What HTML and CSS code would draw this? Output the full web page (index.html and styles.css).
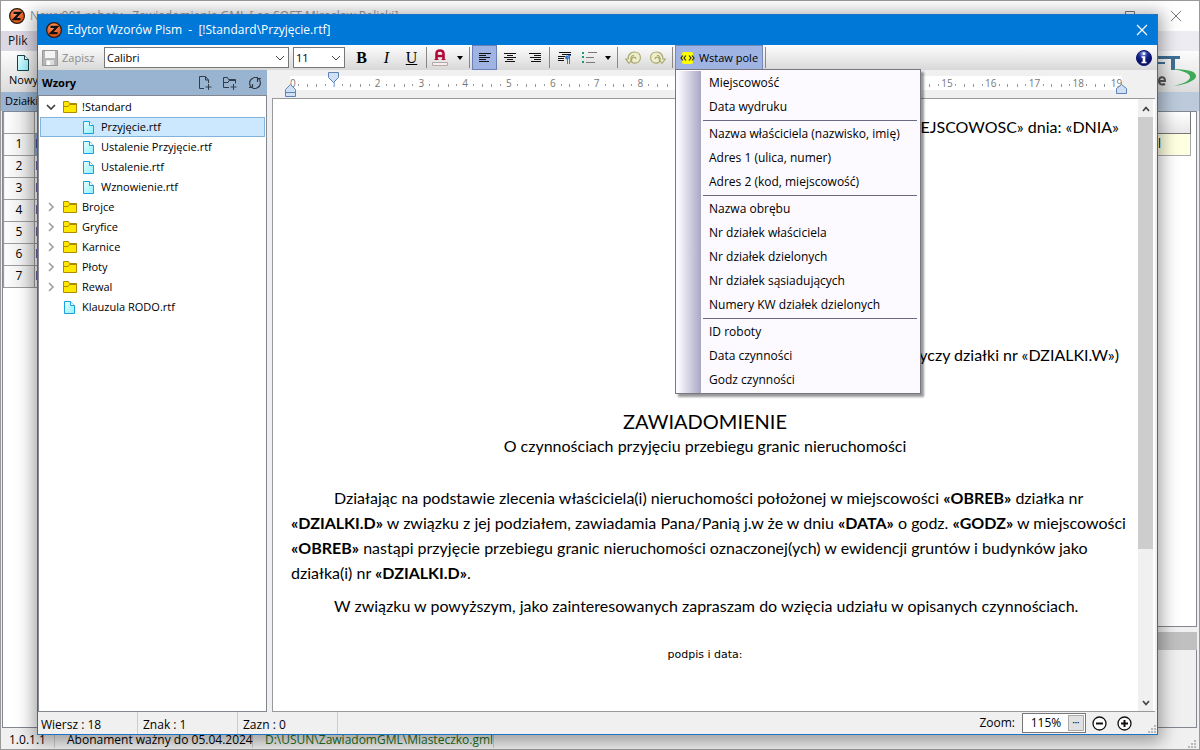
FILE: index.html
```html
<!DOCTYPE html>
<html lang="pl">
<head>
<meta charset="utf-8">
<title>Edytor Wzorów Pism</title>
<link rel="stylesheet" href="styles.css">
</head>
<body>
<svg class="defs" aria-hidden="true">
  <defs>
    <radialGradient id="orange" cx=".45" cy=".3"><stop offset="0" stop-color="#ffa071"/><stop offset="1" stop-color="#e85a1c"/></radialGradient>
    <linearGradient id="cyan" x2="1" y2="1"><stop offset="0" stop-color="#e8ffff"/><stop offset="1" stop-color="#8ff0fa"/></linearGradient>
    <radialGradient id="navy" cx=".45" cy=".2"><stop offset="0" stop-color="#9aa6e0"/><stop offset=".6" stop-color="#1c2c9c"/><stop offset="1" stop-color="#0c1470"/></radialGradient>
  </defs>
  <symbol id="logo" viewBox="0 0 16 16"><circle cx="8" cy="8" r="7.4" fill="url(#orange)" stroke="#2a1a14" stroke-width="1.2"/><path d="M4.5 4.800h6.500L5 11.200h6.500" fill="none" stroke="#111" stroke-width="2.200"/></symbol>
  <symbol id="folder" viewBox="0 0 14 12"><path d="M.5 11.500V.5h5l1 2h7v9z" fill="#ffe800" stroke="#b08a00"/><path d="M1 5.500h4l1.500-2H13" fill="none" stroke="#b08a00"/></symbol>
  <symbol id="file" viewBox="0 0 11 13"><path d="M.5.5h6l4 4v8H.5z" fill="url(#cyan)" stroke="#1ea0dc"/><path d="M6.500.5v4h4" fill="#fff" stroke="#1ea0dc"/></symbol>
  <symbol id="open" viewBox="0 0 10 6"><path d="M1 1l4 4 4-4" fill="none" stroke="#404040" stroke-width="1.700"/></symbol>
  <symbol id="shut" viewBox="0 0 6 10"><path d="M1 1l4 4-4 4" fill="none" stroke="#a0a0a0" stroke-width="1.700"/></symbol>
  <symbol id="grip" viewBox="0 0 9 9"><path d="M6 0h2v2H6zM3 3h2v2H3zM6 3h2v2H6zM0 6h2v2H0zM3 6h2v2H3zM6 6h2v2H6z" fill="#b8b8b8"/></symbol>
</svg>

<main class="app">
  <header class="app-title">
    <svg class="logo"><use href="#logo"/></svg>
    <span>Nowy001 roboty - Zawiadomienia GML [ os-SOFT Mirosław Poliski]</span>
    <span class="grow"></span>
    <svg class="win-buttons" viewBox="0 0 60 12"><path d="M2.500 1.500h9v9h-9zM48 1l10 10M58 1L48 11" fill="none" stroke="#777"/></svg>
  </header>
  <nav class="app-menu"><a href="#">Plik</a></nav>
  <div class="app-tools">
    <button class="new-button" type="button">
      <svg viewBox="0 0 12 16"><path d="M.5.500h7l4 4v11H.5z" fill="url(#cyan)" stroke="#18404c"/><path d="M7.500.5v4h4" fill="#fff" stroke="#18404c"/></svg>
      Nowy
    </button>
    <svg class="brand" viewBox="0 0 60 40" role="img" aria-label="SOFT">
      <path d="M0 5h27v3H0zM18 7h4v12h-4zM12 11v2H3v-2z" fill="#3f6f95"/>
      <path d="M18 18c16 0 25 2 25 7s-12 9-23 10c10-2 17-5 17-9s-9-7-19-8z" fill="#3faa55"/>
      <path d="M6 30h6c0-5-6-5-6 0 0 4 4 4 6 3" fill="none" stroke="#555" stroke-width="2"/>
    </svg>
  </div>
  <div class="app-caption">Działki</div>
  <div class="app-body">
    <div class="parcel-pane">
      <table class="parcels">
        <tr class="head"><th></th><td></td></tr>
        <tr class="current"><th>1</th><td>I</td></tr>
        <tr><th>2</th><td>I</td></tr>
        <tr><th>3</th><td>I</td></tr>
        <tr><th>4</th><td>I</td></tr>
        <tr><th>5</th><td>I</td></tr>
        <tr><th>6</th><td>I</td></tr>
        <tr><th>7</th><td>I</td></tr>
      </table>
    </div>
    <div class="owner-pane">
      <div class="owners"><div class="owner-head"></div><div class="owner-row">el</div></div>
      <div class="owner-bar"></div>
      <div class="owner-notes"></div>
    </div>
  </div>
  <footer class="app-status">
    <span class="version">1.0.1.1</span>
    <span class="licence">Abonament ważny do 05.04.2024</span>
    <span class="path">D:\USUN\ZawiadomGML\Miasteczko.gml</span>
    <span class="grow"></span>
    <svg class="grip"><use href="#grip"/></svg>
  </footer>
</main>

<section class="dialog" role="dialog" aria-labelledby="dialog-title">
  <header class="dialog-title">
    <svg class="logo"><use href="#logo"/></svg>
    <h1 id="dialog-title">Edytor Wzorów Pism&nbsp; -&nbsp; [!Standard\Przyjęcie.rtf]</h1>
    <button class="close" type="button" aria-label="Zamknij"><svg viewBox="0 0 12 12"><path d="M1 1l10 10M11 1L1 11" stroke="#fff" stroke-width="1.200"/></svg></button>
  </header>

  <div class="toolbar">
    <button class="save" type="button" disabled>
      <svg viewBox="0 0 16 16"><path d="M.5.500h15v15H.5z" fill="#b4b4b4" stroke="#999"/><path d="M3 1h10v7H3z" fill="#f4f4f4"/><path d="M4 10h8v5H4z" fill="#ddd"/><path d="M5 11h3v4H5z" fill="#fff"/></svg>
      Zapisz
    </button>
    <select class="font-name" aria-label="Czcionka"><option>Calibri</option></select>
    <select class="font-size" aria-label="Rozmiar"><option>11</option></select>
    <button class="tool style-b" type="button">B</button>
    <button class="tool style-i" type="button">I</button>
    <button class="tool style-u" type="button">U</button>
    <span class="sep"></span>
    <button class="tool wide" type="button" aria-label="Kolor czcionki"><svg viewBox="0 0 32 18"><path d="M4.500 11V4.500Q4.500 1.500 8 1.500T11.500 4.500V11M4 7h8" fill="none" stroke="#b00c38" stroke-width="2.600"/><path d="M2.500 10.500h4M9.500 10.500h4" stroke="#b00c38"/><path d="M.5 13.500h15v3H.5z" fill="#f4eeee" stroke="#b8a8a8"/><path d="M25 7h6l-3 4z"/></svg></button>
    <span class="sep"></span>
    <button class="tool on" type="button" aria-label="Do lewej"><svg viewBox="0 0 12 12"><path d="M0 1.500h12M0 3.500h7M0 5.500h11M0 7.500h7M0 9.500h10" stroke="#111"/></svg></button>
    <button class="tool" type="button" aria-label="Do środka"><svg viewBox="0 0 12 12"><path d="M0 1.500h12M3 3.500h6M0 5.500h12M3 7.500h6M1 9.500h10" stroke="#111"/></svg></button>
    <button class="tool" type="button" aria-label="Do prawej"><svg viewBox="0 0 12 12"><path d="M0 1.500h12M5 3.500h7M1 5.500h11M5 7.500h7M2 9.500h10" stroke="#111"/></svg></button>
    <span class="sep"></span>
    <button class="tool para" type="button" aria-label="Akapit"><svg viewBox="0 0 14 14"><path d="M1 1.500h12M4 3.500h9M0 5.500h7M0 7.500h6M0 9.500h6" stroke="#111"/><path d="M9.500 13V5M11.500 13V5M13 4.500H10" stroke="#3a78d0" fill="none"/><circle cx="9" cy="6.500" r="2" fill="#3a78d0"/></svg></button>
    <button class="tool wide list" type="button" aria-label="Lista"><svg viewBox="0 0 30 14"><path d="M1 1h2v2H1zM1 5h2v2H1zM1 10h2v2H1z" fill="#199a7a"/><path d="M7 1.500h9M5 6.500h8M5 11.500h9" stroke="#777"/><path d="M24 5h6l-3 4z"/></svg></button>
    <span class="sep"></span>
    <button class="tool turn" type="button" aria-label="Cofnij"><svg viewBox="0 0 16 14"><path d="M4 12.500L.8 8h2.400C3 4 5.500 1 9.200 1c3.600 0 6.200 2.300 6.200 5.500s-2.400 5.600-5.600 5.600c-2.200 0-3.700-1.400-3.700-3.100 0-1.600 1.200-2.800 2.700-2.800 1.200 0 2 .8 2 1.800" fill="#eeeecb" stroke="#a9a971" stroke-width="1.200"/><path d="M4 12.500L7 8H5.800c.2-2.400 1.500-3.800 3.400-3.800" fill="none" stroke="#a9a971" stroke-width="1.100"/></svg></button>
    <button class="tool turn" type="button" aria-label="Ponów"><svg class="flip" viewBox="0 0 16 14"><path d="M4 12.500L.8 8h2.400C3 4 5.500 1 9.200 1c3.600 0 6.200 2.300 6.200 5.500s-2.400 5.600-5.600 5.600c-2.200 0-3.700-1.400-3.700-3.100 0-1.600 1.200-2.800 2.700-2.800 1.200 0 2 .8 2 1.800" fill="#eeeecb" stroke="#a9a971" stroke-width="1.200"/><path d="M4 12.500L7 8H5.800c.2-2.400 1.500-3.800 3.400-3.800" fill="none" stroke="#a9a971" stroke-width="1.100"/></svg></button>
    <span class="sep"></span>
    <div class="insert">
      <button class="insert-button" type="button" aria-expanded="true">
        <svg viewBox="0 0 15 12"><rect x="2" width="11" height="12" rx="2" fill="#ff0"/><path d="M3 3.500L1 6l2 2.500M6 3.500L4 6l2 2.500M9 3.500L11 6 9 8.500M12 3.500L14 6l-2 2.500" fill="none" stroke="#222" stroke-width="1.200"/></svg>
        Wstaw pole
      </button>
      <div class="menu">
        <button type="button">Miejscowość</button>
        <button type="button">Data wydruku</button>
        <hr>
        <button type="button">Nazwa właściciela (nazwisko, imię)</button>
        <button type="button">Adres 1 (ulica, numer)</button>
        <button type="button">Adres 2 (kod, miejscowość)</button>
        <hr>
        <button type="button">Nazwa obrębu</button>
        <button type="button">Nr działek właściciela</button>
        <button type="button">Nr działek dzielonych</button>
        <button type="button">Nr działek sąsiadujących</button>
        <button type="button">Numery KW działek dzielonych</button>
        <hr>
        <button type="button">ID roboty</button>
        <button type="button">Data czynności</button>
        <button type="button">Godz czynności</button>
      </div>
    </div>
    <span class="sep"></span>
    <span class="grow"></span>
    <button class="info" type="button" aria-label="Informacje"><svg viewBox="0 0 16 16"><circle cx="8" cy="8" r="7.500" fill="url(#navy)" stroke="#0c1470"/><path d="M6.700 2.500h2.600v2.300H6.700zM5.500 6.200h3.800v5.500h1.200v1.500h-5v-1.500h1.200v-4H5.500z" fill="#fff"/></svg></button>
  </div>

  <div class="work">
    <aside class="side">
      <div class="side-head">
        <h2>Wzory</h2>
        <button type="button" aria-label="Nowy plik"><svg viewBox="0 0 14 14"><path d="M6 12.500H1.500V.5h6l3 3.500v3M7.500.5V4h3M10.500 8v6M7.500 11h6" fill="none" stroke="#333c48"/></svg></button>
        <button type="button" aria-label="Nowy folder"><svg viewBox="0 0 14 14"><path d="M6 11.500H.5v-10h4l1 2h7v4M.5 6.500H5l1-2h6M10.500 8v6M7.500 11h6" fill="none" stroke="#333c48"/></svg></button>
        <button type="button" aria-label="Odśwież"><svg viewBox="0 0 14 14"><path d="M3.500 11.500C.5 8.500 1 3.500 5.500 2M5.500 1.500H10M1 11.500h3.500V8M10.500 2.500c3 3 2.500 8-2 9.500M8.500 12.500H4.500M13 2.500H9.500V6" fill="none" stroke="#333c48" stroke-width="1.200"/></svg></button>
      </div>
      <ul class="tree">
        <li><svg class="twist open"><use href="#open"/></svg><svg class="folder"><use href="#folder"/></svg>!Standard</li>
        <li class="child selected"><svg class="file"><use href="#file"/></svg>Przyjęcie.rtf</li>
        <li class="child"><svg class="file"><use href="#file"/></svg>Ustalenie Przyjęcie.rtf</li>
        <li class="child"><svg class="file"><use href="#file"/></svg>Ustalenie.rtf</li>
        <li class="child"><svg class="file"><use href="#file"/></svg>Wznowienie.rtf</li>
        <li><svg class="twist"><use href="#shut"/></svg><svg class="folder"><use href="#folder"/></svg>Brojce</li>
        <li><svg class="twist"><use href="#shut"/></svg><svg class="folder"><use href="#folder"/></svg>Gryfice</li>
        <li><svg class="twist"><use href="#shut"/></svg><svg class="folder"><use href="#folder"/></svg>Karnice</li>
        <li><svg class="twist"><use href="#shut"/></svg><svg class="folder"><use href="#folder"/></svg>Płoty</li>
        <li><svg class="twist"><use href="#shut"/></svg><svg class="folder"><use href="#folder"/></svg>Rewal</li>
        <li class="loose"><svg class="file"><use href="#file"/></svg>Klauzula RODO.rtf</li>
      </ul>
    </aside>

    <div class="editor">
      <div class="ruler">
        <ol class="scale">
          <li class="edge">0</li><li>1</li><li>2</li><li>3</li><li>4</li><li>5</li><li>6</li><li>7</li><li>8</li><li>9</li><li>10</li><li>11</li><li>12</li><li>13</li><li>14</li><li>15</li><li>16</li><li>17</li><li>18</li><li class="edge last">19</li>
        </ol>
        <svg class="mark first" viewBox="0 0 11 12"><path d="M.5.5h10v5l-5 5-5-5z" fill="#cfe0f5" stroke="#5f83b5"/></svg>
        <svg class="mark left" viewBox="0 0 11 13"><path d="M.5 12.500V5.500l5-5 5 5v7zM.5 8.500h10" fill="#cfe0f5" stroke="#5f83b5"/></svg>
        <svg class="mark right" viewBox="0 0 11 10"><path d="M.5 9.500V4.500l5-4 5 4v5z" fill="#cfe0f5" stroke="#5f83b5"/></svg>
      </div>
      <div class="paper">
        <article class="text">
          <p class="place">«MIEJSCOWOSC» dnia: «DNIA»</p>
          <p class="ref">(dotyczy działki nr «DZIALKI.W»)</p>
          <h3>ZAWIADOMIENIE</h3>
          <p class="sub">O czynnościach przyjęciu przebiegu granic nieruchomości</p>
          <p class="body">Działając na podstawie zlecenia właściciela(i) nieruchomości położonej w miejscowości <b>«OBREB»</b> działka nr<br><b>«DZIALKI.D»</b> w związku z jej podziałem, zawiadamia Pana/Panią j.w że w dniu <b>«DATA»</b> o godz. <b>«GODZ»</b> w miejscowości<br><b>«OBREB»</b> nastąpi przyjęcie przebiegu granic nieruchomości oznaczonej(ych) w ewidencji gruntów i budynków jako<br>działka(i) nr <b>«DZIALKI.D»</b>.</p>
          <p class="body">W związku w powyższym, jako zainteresowanych zapraszam do wzięcia udziału w opisanych czynnościach.</p>
          <p class="sign">podpis i data:</p>
        </article>
        <div class="scroll">
          <svg viewBox="0 0 8 6"><path d="M1 5l3-3.500L7 5" fill="none" stroke="#444" stroke-width="1.700"/></svg>
          <div class="thumb"></div>
          <svg viewBox="0 0 8 6"><path d="M1 1l3 3.500L7 1" fill="none" stroke="#444" stroke-width="1.700"/></svg>
        </div>
      </div>
    </div>
  </div>

  <footer class="dialog-status">
    <span class="cell">Wiersz : 18</span>
    <span class="cell">Znak : 1</span>
    <span class="cell">Zazn : 0</span>
    <span class="grow"></span>
    <label for="zoom">Zoom:</label>
    <span class="zoom-box"><input id="zoom" type="text" value="115%"><button type="button" aria-label="Wybierz">•••</button></span>
    <button class="round" type="button" aria-label="Pomniejsz"><svg viewBox="0 0 15 15"><circle cx="7.500" cy="7.500" r="6.500" fill="#fff" stroke="#111" stroke-width="1.300"/><path d="M4 7.500h7" stroke="#111" stroke-width="2"/></svg></button>
    <button class="round" type="button" aria-label="Powiększ"><svg viewBox="0 0 15 15"><circle cx="7.500" cy="7.500" r="6.500" fill="#fff" stroke="#111" stroke-width="1.300"/><path d="M4 7.500h7M7.500 4v7" stroke="#111" stroke-width="2"/></svg></button>
    <svg class="grip"><use href="#grip"/></svg>
  </footer>
</section>
</body>
</html>
```
FILE: styles.css
```css
* { box-sizing: border-box; }
body { margin: 0; min-height: 100vh; position: relative; overflow: hidden; background: #f0f0f0; color: #000; font: 12px/16px "Open Sans", "Noto Sans", sans-serif; }
button, input, select { font: inherit; color: inherit; }
button { margin: 0; padding: 0; border: 0; background: none; display: flex; align-items: center; justify-content: center; }
h1, h2, h3, p, ul, ol { margin: 0; padding: 0; font-weight: normal; }
ul, ol { list-style: none; }
svg { display: block; flex: none; }
.defs { position: absolute; width: 0; height: 0; }
.grow { flex: 1; }
.logo { width: 16px; height: 16px; }
.grip { width: 9px; height: 9px; align-self: flex-end; }

/* main window */
.app { display: flex; flex-direction: column; height: 100vh; border: 1px solid #999; }
.app-title { display: flex; align-items: center; gap: 5px; height: 30px; flex: none; padding: 0 16px 0 8px; background: #fff; color: #999; }
.win-buttons { width: 60px; height: 12px; }
.app-menu { height: 20px; flex: none; padding: 2px 7px; background: linear-gradient(90deg, #dcd7e5, #ececf2); }
.app-menu a { color: #111; text-decoration: none; }
.app-tools { display: flex; justify-content: space-between; height: 41px; flex: none; padding-left: 8px; background: linear-gradient(#fcfcfc, #dcdcdc); }
.new-button { flex-direction: column; gap: 1px; justify-content: flex-start; padding-top: 4px; font-size: 11px; }
.new-button svg { width: 12px; height: 16px; }
.brand { width: 60px; height: 40px; margin-right: -14px; }
.app-caption { height: 19px; flex: none; padding: 1px 4px; background: linear-gradient(90deg, #99b4d1, #bccadb); font-size: 11px; }
.app-body { display: flex; flex: 1; gap: 4px; padding: 0 2px 0 1px; min-height: 0; }
.parcel-pane { flex: 1; background: #fff; border: 1px solid #828790; }
.parcels { border-collapse: collapse; }
.parcels th, .parcels td { height: 22px; padding: 0; border: 1px solid #9a9a9a; }
.parcels .head th, .parcels .head td { height: 21px; border-top: 0; }
.parcels th { width: 31px; background: linear-gradient(90deg, #fdfdfd, #e4e4e4); font-weight: normal; }
.parcels td { width: 90px; color: #003c90; }
.parcels .current td { background: #8db2e0; }
.owner-pane { flex: 1; display: flex; flex-direction: column; min-width: 0; }
.owners { flex: 1; background: #fff; border: 1px solid #828790; padding-right: 5px; }
.owner-head { height: 22px; border: 1px solid #777; border-top: 0; background: linear-gradient(#fff, #e8e8e8); }
.owner-row { height: 22px; padding: 2px 29px; border: 1px solid #aaa; border-top: 0; background: #ffffe1; text-align: right; }
.owner-bar { height: 18px; margin-top: 5px; background: #c0c0c0; }
.owner-notes { height: 78px; border: 1px solid #828790; border-top: 0; background: #f0f0f0; }
.app-status { display: flex; align-items: center; height: 21px; flex: none; background: #f0f0f0; padding: 2px 2px 0 0; white-space: nowrap; }
.app-status span:not(.grow) { border-right: 1px solid #ccc; }
.version { width: 54px; padding-left: 8px; }
.licence { width: 198px; padding-left: 12px; }
.app-status .path { padding-left: 12px; color: #207020; border: 0; }

/* dialog window */
.dialog { position: absolute; inset: 14px 42px 15px 37px; display: flex; flex-direction: column; border: 1px solid #1d74c4; background: #f0f0f0; box-shadow: 0 3px 16px 4px rgba(0, 0, 0, .35); }
.dialog-title { display: flex; align-items: center; gap: 5px; height: 30px; flex: none; padding: 0 9px 0 8px; background: #0078d7; color: #fff; }
.dialog-title h1 { font-size: 12px; flex: 1; }
.close svg { width: 12px; height: 12px; }

.toolbar { display: flex; align-items: center; height: 25px; flex: none; padding: 0 5px 0 4px; background: linear-gradient(#fdfdfd, #d8d8d8); font-size: 11px; }
.save { gap: 4px; width: 62px; justify-content: flex-start; color: #8c8c8c; }
.save svg { width: 16px; height: 16px; }
.toolbar select { height: 21px; padding: 0 0 0 2px; border: 1px solid #777; appearance: none; background: #fff url("data:image/svg+xml,%3Csvg xmlns='http://www.w3.org/2000/svg' width='10' height='6'%3E%3Cpath d='M1 1l4 4 4-4' fill='none' stroke='%23444'/%3E%3C/svg%3E") no-repeat right 3px center; }
.font-name { width: 185px; }
.toolbar .font-size { width: 52px; margin: 0 4px; }
.tool { width: 25px; height: 25px; }
.tool svg { width: 12px; height: 12px; }
.tool.wide { width: 38px; }
.tool.wide svg { width: 32px; height: 18px; }
.tool.list svg { width: 30px; height: 14px; }
.tool.para svg { width: 14px; height: 14px; }
.tool.turn svg { width: 16px; height: 14px; }
.flip { transform: scaleX(-1); }
.tool.on { background: #a0b4e4; border: 1px solid #6c80b8; }
.style-b, .style-i, .style-u { font: 16px/20px "Liberation Serif", serif; }
.style-b { font-weight: bold; }
.style-i { font-style: italic; }
.style-u { text-decoration: underline; }
.sep { width: 1px; height: 21px; margin: 0 2px; background: #888; }
.info svg { width: 16px; height: 16px; }

.insert { position: relative; font-size: 12px; }
.insert-button { gap: 4px; width: 88px; height: 25px; background: #a0b4e4; border: 1px solid #7688b8; font-size: 11px; }
.insert-button svg { width: 15px; height: 12px; }
.menu { position: absolute; z-index: 2; top: 24px; left: 0; width: 246px; padding: 1px 3px 1px 27px; border: 1px solid #77777f; background: linear-gradient(90deg, #fcfaff, #a9a8c4) 2px 1px / 23px 100% no-repeat, #fcfaff; box-shadow: 3px 3px 2px rgba(0, 0, 0, .4); }
.menu button { width: 100%; height: 24px; padding-left: 6px; justify-content: flex-start; white-space: nowrap; }
.menu hr { height: 1px; margin: 1px 0; border: 0; background: #6a6a84; }

.work { display: flex; flex: 1; min-height: 0; gap: 5px; }
.side { width: 229px; flex: none; display: flex; flex-direction: column; }
.side-head { display: flex; align-items: center; gap: 11px; height: 25px; padding: 0 5px 0 4px; background: #99b4d1; }
.side-head h2 { flex: 1; font: bold 11px/16px "Noto Sans", sans-serif; }
.side-head svg { width: 14px; height: 14px; }
.tree { flex: 1; padding: 1px; border: 1px solid #828790; background: #fff; font-size: 11px; }
.tree li { display: flex; align-items: center; height: 20px; gap: 5px; padding-left: 5px; border: 1px solid transparent; }
.tree .child { padding-left: 42px; gap: 7px; }
.tree .loose { padding-left: 23px; gap: 7px; }
.tree .selected { background: #cce8ff; border-color: #84b4dc; }
.twist { width: 10px; height: 10px; margin-right: 2px; }
.twist.open { height: 6px; }
.folder { width: 14px; height: 12px; }
.file { width: 11px; height: 13px; }

.editor { flex: 1; min-width: 0; display: flex; flex-direction: column; }
.ruler { position: relative; height: 28px; flex: none; padding: 6px 35px 0 18px; }
.scale { display: flex; height: 14px; background: #fff; color: #777; font: 10px/14px "Open Sans", sans-serif; }
.scale li { flex: 2; text-align: center; background: linear-gradient(#999, #999) 10% 8px / 1px 3px no-repeat, linear-gradient(#999, #999) 30% 8px / 1px 2px no-repeat, linear-gradient(#999, #999) 70% 8px / 1px 2px no-repeat, linear-gradient(#999, #999) 90% 8px / 1px 3px no-repeat; }
.scale .edge { flex: 1; text-align: left; background: linear-gradient(#999, #999) 40% 8px / 1px 2px no-repeat, linear-gradient(#999, #999) 80% 8px / 1px 3px no-repeat; }
.scale .last { text-align: right; background: linear-gradient(#999, #999) 20% 8px / 1px 3px no-repeat; }
.mark { position: absolute; width: 11px; }
.mark.first { left: 56px; top: 2px; height: 12px; }
.mark.left { left: 13px; top: 14px; height: 13px; }
.mark.right { right: 30px; top: 14px; height: 10px; }
.paper { display: flex; flex: 1; min-height: 0; border: 1px solid #999; border-right: 0; background: #fff; margin-right: 2px; }
.text { flex: 1; min-width: 0; padding: 15px 19px 0 18px; font: 16px/25px Lato, sans-serif; white-space: nowrap; }
.place, .ref { text-align: right; }
.ref { margin-top: 203px; }
.text h3 { margin-top: 42px; font-size: 20px; line-height: 24px; text-align: center; }
.sub { text-align: center; margin-bottom: 27px; }
.body { text-indent: 43px; margin-bottom: 8px; }
.sign { margin-top: 26px; font: 11px/22px "DejaVu Sans", sans-serif; text-align: center; }
.scroll { width: 15px; flex: none; display: flex; flex-direction: column; align-items: center; padding: 7px 0 5px; background: #f0f0f0; gap: 5px; margin-right: 2px; }
.scroll svg { width: 8px; height: 6px; }
.thumb { width: 100%; height: 432px; margin-bottom: auto; background: #cdcdcd; }

.dialog-status { display: flex; align-items: center; height: 22px; flex: none; }
.dialog-status .cell { width: 100px; height: 22px; padding: 5px 0 0 5px; border-right: 1px solid #ccc; }
.dialog-status .cell:first-child { padding-left: 3px; }
.zoom-box { display: flex; width: 64px; height: 20px; margin-left: 7px; padding: 1px; border: 1px solid #777; background: #fff; }
.zoom-box input { flex: 1; min-width: 0; padding: 0; border: 0; text-align: center; }
.zoom-box button { width: 16px; border: 1px solid #aaa; background: #e1e1e1; font-size: 6px; }
.round { margin-left: 6px; margin-right: 4px; }
.round svg { width: 15px; height: 15px; }
.dialog-status .grip { margin-left: 12px; }
```
